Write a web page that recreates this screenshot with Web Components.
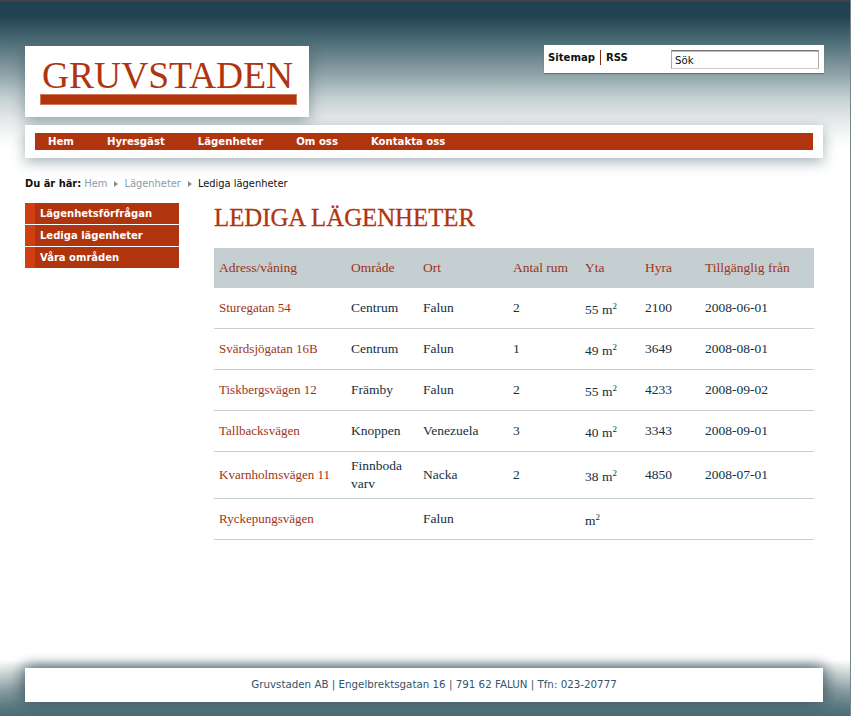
<!DOCTYPE html>
<html lang="sv"><head><meta charset="utf-8">
<style>
html,body{margin:0;padding:0;background:#fff}
</style></head><body>
<gs-page>
  <gs-topbar slot="top"></gs-topbar>
  <gs-nav slot="nav">
    <a>Hem</a><a>Hyresgäst</a><a>Lägenheter</a><a>Om oss</a><a>Kontakta oss</a>
  </gs-nav>
  <gs-crumbs slot="crumbs"></gs-crumbs>
  <gs-side slot="side">
    <a>Lägenhetsförfrågan</a><a>Lediga lägenheter</a><a>Våra områden</a>
  </gs-side>
  <gs-listing slot="main"></gs-listing>
  <gs-foot slot="foot"></gs-foot>
</gs-page>
<script>
function def(name, html, init){
  customElements.define(name, class extends HTMLElement{
    constructor(){super();this.attachShadow({mode:'open'}).innerHTML=html;}
    connectedCallback(){ if(init) init(this.shadowRoot); }
  });
}
const SANS='"DejaVu Sans","Liberation Sans",sans-serif';
const SERIF='"Liberation Serif",serif';
def('gs-page',`<style>
:host{display:block;position:relative;width:851px;height:716px;overflow:hidden;box-sizing:border-box;font-family:${SANS}}
.wrap{height:716px;box-sizing:border-box;display:flex;flex-direction:column;padding:0 27px 0 25px;border-right:1px solid #7a8689;
  background:
   linear-gradient(to bottom,#444 0,#444 1px,#1f4152 2px,#204252 16px,#4a6b74 40px,#8ea3a8 74px,#c4d0d2 98px,#e0e5e5 116px,#f6f8f8 135px,#fff 150px) top/100% 160px no-repeat,
   linear-gradient(to bottom,#fff 0,#c9d2d4 14px,#8ba0a5 30px,#5d7a81 46px,#4c6c74 56px) bottom/100% 56px no-repeat,
   #fff}
.cols{display:flex;gap:35px;margin-top:12px}
.foot{margin-top:auto}
</style><div class="wrap">
<slot name="top"></slot><slot name="nav"></slot><slot name="crumbs"></slot>
<div class="cols"><slot name="side"></slot><slot name="main"></slot></div>
<div class="foot"><slot name="foot"></slot></div>
</div>`);
def('gs-topbar',`<style>
:host{display:flex;justify-content:space-between;align-items:flex-start;padding-top:45px;margin-right:-1px}
.logo{margin-top:1px;width:284px;height:71px;box-sizing:border-box;background:#fff;padding:12px 12px 0 15px;box-shadow:0 4px 14px rgba(30,60,70,.4)}
.name{font:37.5px/35px "Liberation Serif",serif;color:#b0350f;margin-left:2px;white-space:nowrap}
.rule{height:11px;background:#b0350f;margin-top:1px;border:1px solid #cf7a5c;box-sizing:border-box}
.tools{width:280px;height:28px;box-sizing:border-box;background:#fff;box-shadow:0 1px 1px #5d7a81;display:flex;padding:5px 5px 0 4px}
.links{font:bold 10.1px/15px ${SANS};color:#111;display:flex;margin-right:auto}
.links span{display:block;height:15px}
.links span+span{border-left:1px solid #8a2a10;margin-left:5px;padding-left:5px}
.q{width:148px;height:19px;box-sizing:border-box;border:1px solid #aaa;border-top:1px solid #777;border-bottom-color:#ccc;box-shadow:inset 0 1px 0 #bbb;font:10.2px/20px ${SANS};color:#111;padding-left:3px;background:#fff}
</style>
<div class="logo"><div class="name">GRUVSTADEN</div><div class="rule"></div></div>
<div class="tools"><div class="links"><span>Sitemap</span><span>RSS</span></div><div class="q">Sök</div></div>`);
def('gs-nav',`<style>
:host{display:block;margin-top:8px;background:#fff;padding:8px 10px;box-shadow:0 4px 14px rgba(30,60,70,.4)}
.bar{background:#b0350f;height:17px;display:flex;padding-left:13px;gap:33px;font:bold 10.15px/17px ${SANS};color:#fff}
::slotted(a){white-space:nowrap}
</style><div class="bar"><slot></slot></div>`);
def('gs-crumbs',`<style>
:host{display:block;margin-top:19px;font:9.9px/14px ${SANS};color:#111;white-space:nowrap}
b{color:#111}.g{color:#8d9ba6}
.t{display:inline-block;width:0;height:0;border-left:4px solid #8a8f90;border-top:3px solid transparent;border-bottom:3px solid transparent;margin:0 6px 0 7px}
</style><b>Du är här:</b> <span class="g">Hem</span><i class="t"></i><span class="g">Lägenheter</span><i class="t"></i>Lediga lägenheter`);
def('gs-side',`<style>
:host{display:flex;flex-direction:column;gap:1px;width:154px;flex:none}
::slotted(a){display:block;height:21px;background:#b0350f;border-left:10px solid #d03f12;padding-left:5px;font:bold 10px/21px ${SANS};color:#fff;white-space:nowrap}
</style><slot></slot>`);
const rows=[
['Sturegatan 54','Centrum','Falun','2','55','2100','2008-06-01'],
['Svärdsjögatan 16B','Centrum','Falun','1','49','3649','2008-08-01'],
['Tiskbergsvägen 12','Främby','Falun','2','55','4233','2008-09-02'],
['Tallbacksvägen','Knoppen','Venezuela','3','40','3343','2008-09-01'],
['Kvarnholmsvägen 11','Finnboda varv','Nacka','2','38','4850','2008-07-01'],
['Ryckepungsvägen','','Falun','','','','']];
def('gs-listing',`<style>
:host{display:block;width:600px;flex:none;font:13.5px/18px ${SERIF};color:#12303f}
h1{margin:0;font:normal 24.8px/30px ${SERIF};-webkit-text-stroke:.3px #b0350f;color:#b0350f;height:45px}
table{border-collapse:collapse;table-layout:fixed;width:600px}
th{background:#c5ced1;height:40px;padding:0 5px;text-align:left;font-weight:normal;color:#9e3418}
td{height:40px;padding:0 5px;border-bottom:1px solid #c5d0d2;box-sizing:content-box}
td:first-child{color:#9e3418;font-size:13px}
tr.tall td{height:46px}
sup{font-size:9px;line-height:18px;vertical-align:5px}
</style><h1>LEDIGA LÄGENHETER</h1>
<table><colgroup><col style="width:132px"><col style="width:72px"><col style="width:90px"><col style="width:72px"><col style="width:60px"><col style="width:60px"><col></colgroup>
<thead><tr><th>Adress/våning</th><th>Område</th><th>Ort</th><th>Antal rum</th><th>Yta</th><th>Hyra</th><th>Tillgänglig från</th></tr></thead><tbody></tbody></table>`,
r=>{const b=r.querySelector('tbody');if(b.children.length)return;
 rows.forEach((d,i)=>{const t=document.createElement('tr');if(i==4)t.className='tall';
  d.forEach((v,j)=>{const c=document.createElement('td');
   if(j==4){c.innerHTML=(v?v+' ':'')+'m<sup>2</sup>';}else c.textContent=v;t.append(c);});b.append(t);});});
def('gs-foot',`<style>
:host{display:block;margin-bottom:14px;background:#fff;height:34px;padding-left:20px;text-align:center;font:10.3px/32px ${SANS};color:#34546a;box-shadow:0 -3px 12px rgba(30,60,70,.45),8px 0 14px rgba(30,60,70,.3),-8px 0 14px rgba(30,60,70,.3)}
</style>Gruvstaden AB | Engelbrektsgatan 16 | 791 62 FALUN | Tfn: 023-20777`);
</script>
</body></html>
